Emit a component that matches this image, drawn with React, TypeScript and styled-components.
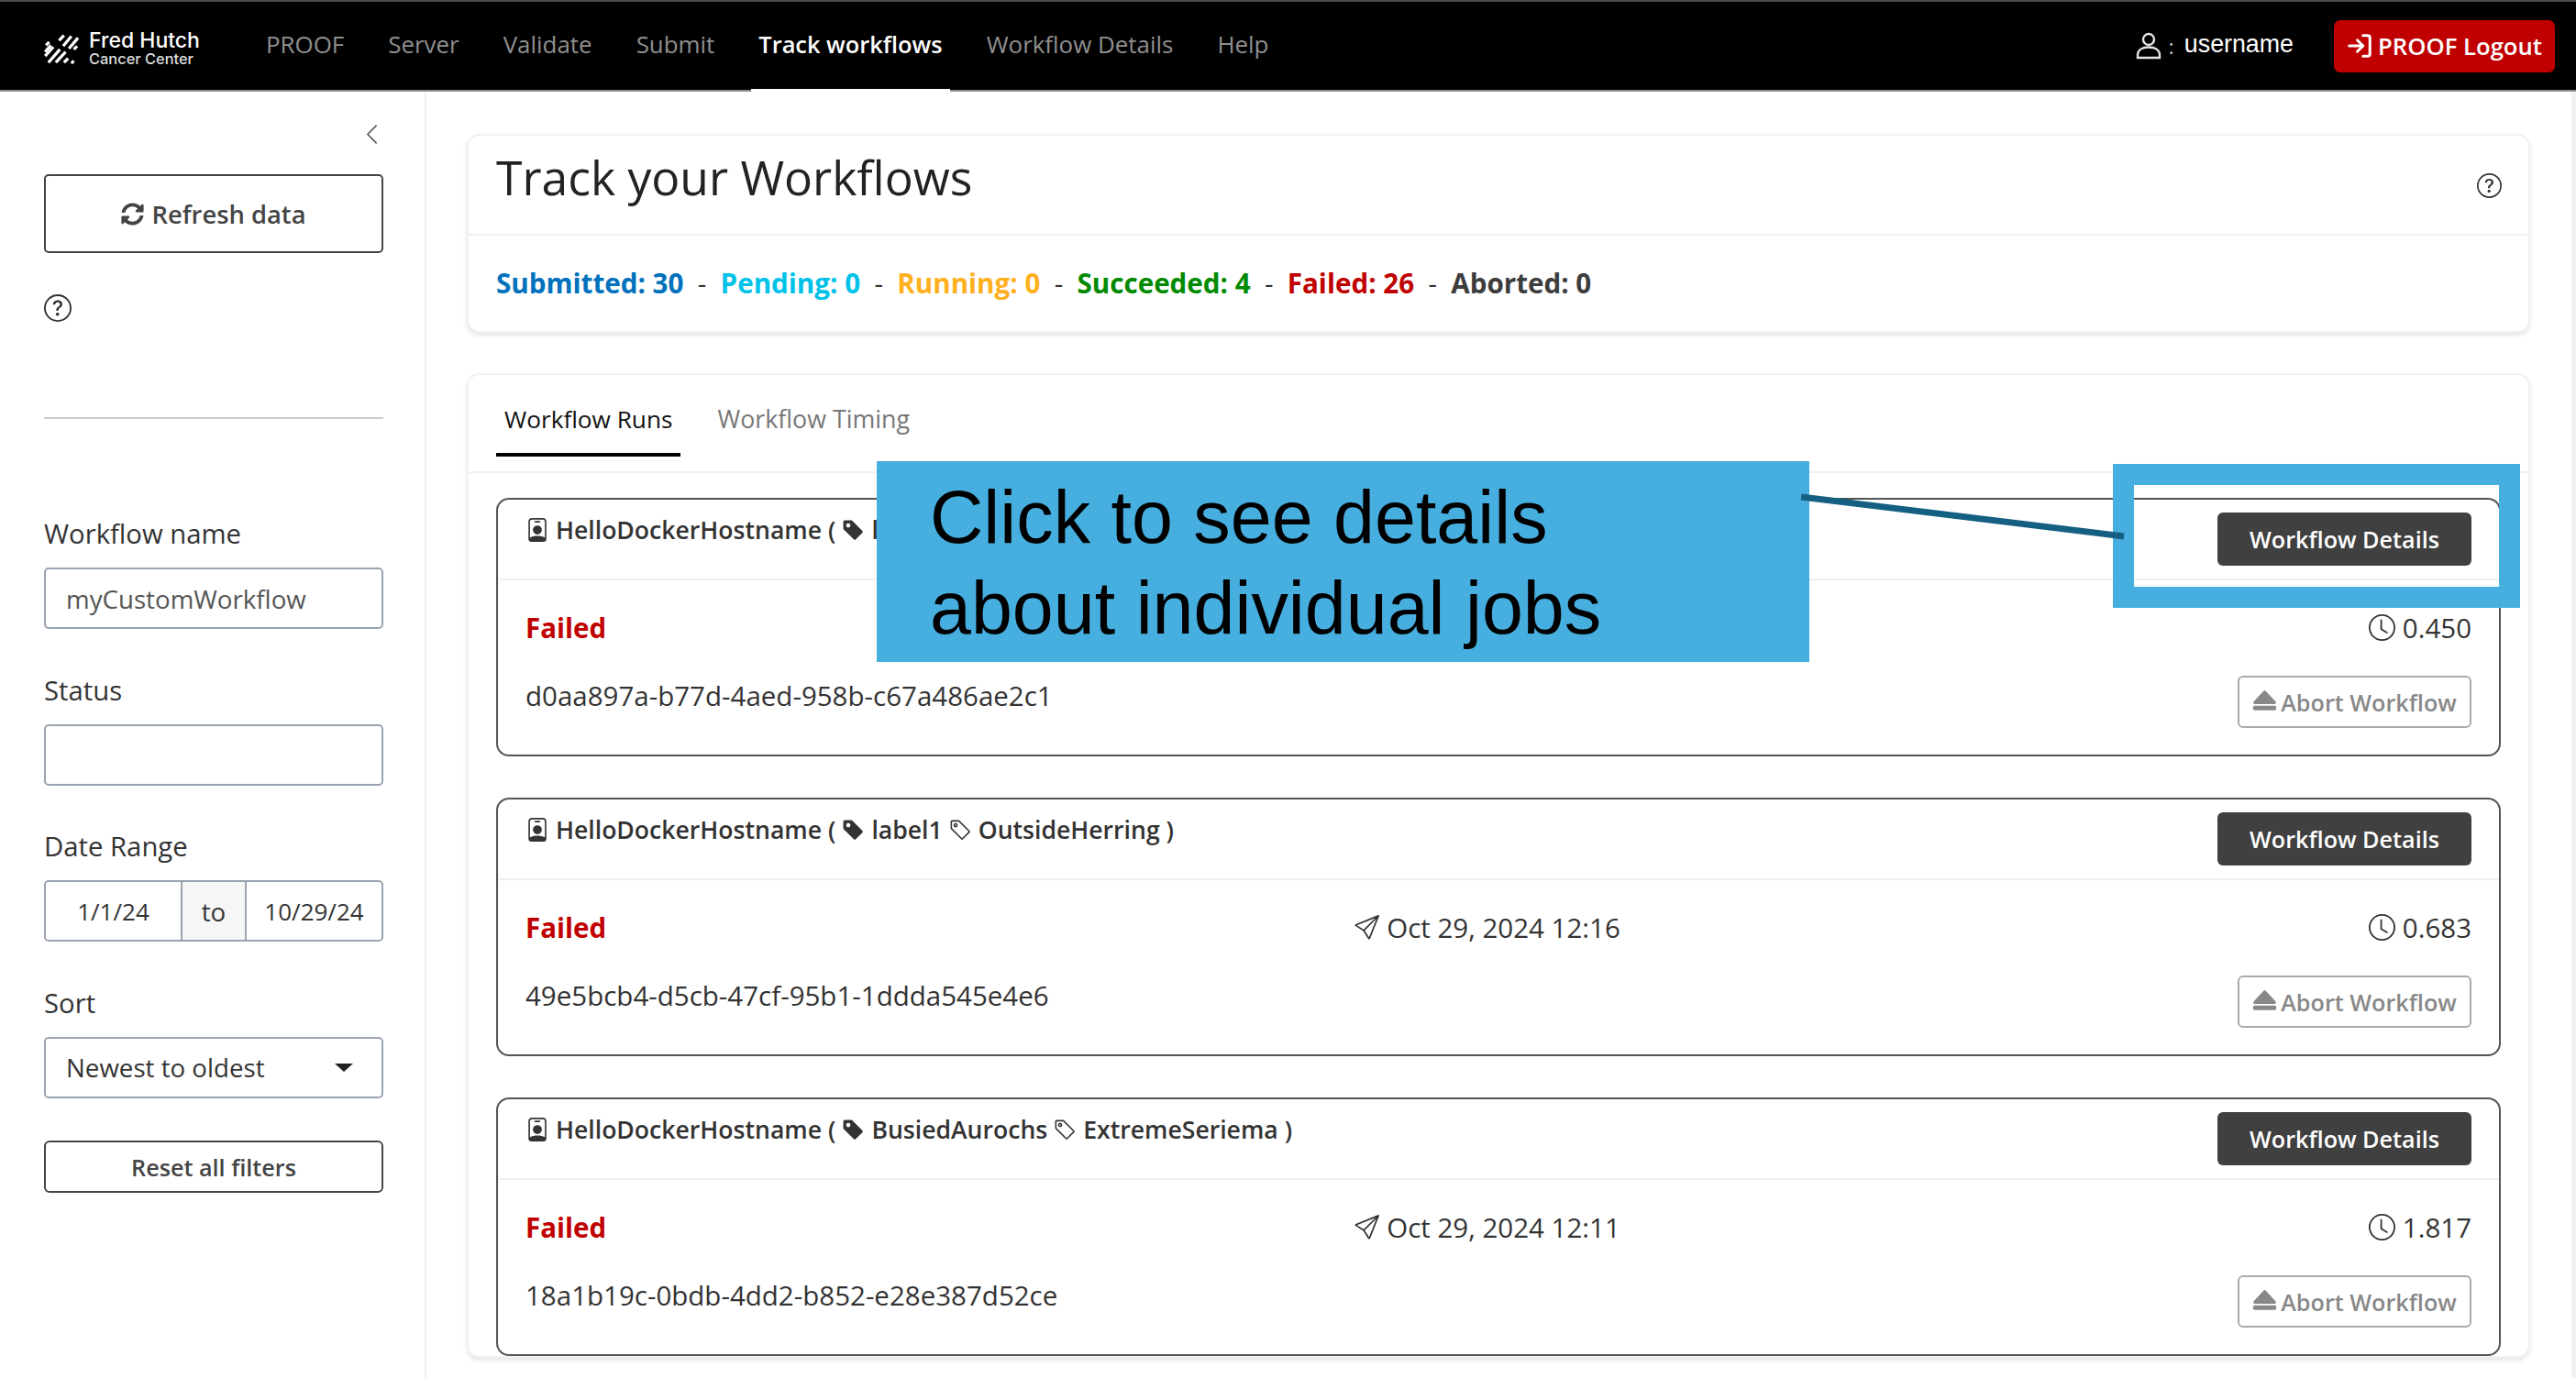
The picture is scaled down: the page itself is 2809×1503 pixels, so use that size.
import React from "react";
import styled, { createGlobalStyle } from "styled-components";
import {
  BsChevronLeft,
  BsClock,
  BsEjectFill,
  BsPersonBadge,
  BsQuestionCircle,
  BsSend,
  BsTag,
  BsTagFill,
} from "react-icons/bs";
import { FaSyncAlt } from "react-icons/fa";
import { LogIn } from "lucide-react";

const GlobalStyle = createGlobalStyle`
  html, body {
    margin: 0;
    padding: 0;
    background: #fff;
    overflow: hidden;
  }
  * {
    box-sizing: border-box;
  }
  body {
    font-family: "Open Sans", "Liberation Sans", sans-serif;
    color: #333;
  }
`;

const runs = [
  {
    labelA: "label1",
    labelB: "OutsideHerring",
    date: "Oct 29, 2024 12:21",
    time: "0.450",
    id: "d0aa897a-b77d-4aed-958b-c67a486ae2c1",
  },
  {
    labelA: "label1",
    labelB: "OutsideHerring",
    date: "Oct 29, 2024 12:16",
    time: "0.683",
    id: "49e5bcb4-d5cb-47cf-95b1-1ddda545e4e6",
  },
  {
    labelA: "BusiedAurochs",
    labelB: "ExtremeSeriema",
    date: "Oct 29, 2024 12:11",
    time: "1.817",
    id: "18a1b19c-0bdb-4dd2-b852-e28e387d52ce",
  },
];

const stats = [
  { label: "Submitted: 30", color: "#0071bc" },
  { label: "Pending: 0", color: "#00c2e8" },
  { label: "Running: 0", color: "#ffb01f" },
  { label: "Succeeded: 4", color: "#008a00" },
  { label: "Failed: 26", color: "#c00000" },
  { label: "Aborted: 0", color: "#3d3d3d" },
];

const Logo = () => (
  <svg width="40" height="34" viewBox="0 0 44 38" fill="none" stroke="#fff" strokeWidth="3.6">
    <path d="M18 9l6-6M23 16L33 4M30 19L41 6M36 20l4-4M2 15l4-4M1 23l7-8" />
    <path d="M1 28L11 17M5 36l14-16M14 36l12-13M24 36l5-5M33 37l3-3" />
  </svg>
);

const UserIcon = () => (
  <svg width="28" height="30" viewBox="0 0 28 30" fill="none" stroke="#e6e6e6" strokeWidth="2.4">
    <circle cx="14" cy="8" r="6" />
    <path d="M2 28v-3c0-5.500 5-8.500 12-8.500s12 3 12 8.500v3z" />
  </svg>
);

export default function App() {
  return (
    <Page>
      <GlobalStyle />
      <NavBar>
        <LogoBlock>
          <Logo />
          <LogoText>
            <LogoName>Fred Hutch</LogoName>
            <LogoSub>Cancer Center</LogoSub>
          </LogoText>
        </LogoBlock>
        <NavLinks>
          <NavLink>PROOF</NavLink>
          <NavLink>Server</NavLink>
          <NavLink>Validate</NavLink>
          <NavLink>Submit</NavLink>
          <NavLink $active>Track workflows</NavLink>
          <NavLink>Workflow Details</NavLink>
          <NavLink>Help</NavLink>
        </NavLinks>
        <UserBlock>
          <UserIcon />
          <UserColon>:</UserColon>
          <UserName>username</UserName>
          <LogoutButton>
            <LogIn size={30} strokeWidth={2.4} />
            PROOF Logout
          </LogoutButton>
        </UserBlock>
      </NavBar>
      <Body>
        <Sidebar>
          <Collapse>
            <BsChevronLeft size={25} />
          </Collapse>
          <RefreshButton>
            <FaSyncAlt size={25} />
            Refresh data
          </RefreshButton>
          <SideHelp>
            <BsQuestionCircle size={30} />
          </SideHelp>
          <SideDivider />
          <Field>
            <FieldLabel>Workflow name</FieldLabel>
            <TextInput $muted>myCustomWorkflow</TextInput>
          </Field>
          <Field>
            <FieldLabel>Status</FieldLabel>
            <TextInput />
          </Field>
          <Field>
            <FieldLabel>Date Range</FieldLabel>
            <DateGroup>
              <DateCell>1/1/24</DateCell>
              <DateTo>to</DateTo>
              <DateCell>10/29/24</DateCell>
            </DateGroup>
          </Field>
          <Field>
            <FieldLabel>Sort</FieldLabel>
            <TextInput>
              Newest to oldest
              <Caret />
            </TextInput>
          </Field>
          <ResetButton>Reset all filters</ResetButton>
        </Sidebar>
        <Main>
          <Card>
            <TitleRow>
              <Title>Track your Workflows</Title>
              <TitleHelp>
                <BsQuestionCircle size={27} />
              </TitleHelp>
            </TitleRow>
            <StatsRow>
              {stats.map((s, i) => (
                <React.Fragment key={s.label}>
                  {i > 0 && <StatDash>-</StatDash>}
                  <Stat $color={s.color}>{s.label}</Stat>
                </React.Fragment>
              ))}
            </StatsRow>
          </Card>
          <Card>
            <Tabs>
              <Tab $active>Workflow Runs</Tab>
              <Tab>Workflow Timing</Tab>
            </Tabs>
            <RunList>
              {runs.map((r) => (
                <RunCard key={r.id}>
                  <RunHead>
                    <RunName>
                      <BsPersonBadge size={26} />
                      HelloDockerHostname (
                      <BsTagFill size={25} />
                      {r.labelA}
                      <BsTag size={25} />
                      {r.labelB} )
                    </RunName>
                    <DetailsButton>Workflow Details</DetailsButton>
                  </RunHead>
                  <RunBody>
                    <RunLine>
                      <FailedText>Failed</FailedText>
                      <RunDate>
                        <BsSend size={27} />
                        {r.date}
                      </RunDate>
                      <RunTime>
                        <BsClock size={29} />
                        {r.time}
                      </RunTime>
                    </RunLine>
                    <RunLine>
                      <RunId>{r.id}</RunId>
                      <AbortButton>
                        <BsEjectFill size={27} />
                        Abort Workflow
                      </AbortButton>
                    </RunLine>
                  </RunBody>
                </RunCard>
              ))}
            </RunList>
          </Card>
        </Main>
      </Body>
      <Callout>
        Click to see details
        <br />
        about individual jobs
      </Callout>
      <CalloutFrame />
      <Connector viewBox="0 0 360 56" width="360" height="56">
        <line x1="3" y1="4" x2="355" y2="47" stroke="#156082" strokeWidth="7" />
      </Connector>
    </Page>
  );
}

const Page = styled.div`
  position: relative;
  width: 2809px;
  height: 1503px;
  overflow: hidden;
  background: #fff;
`;
const NavBar = styled.header`
  display: flex;
  align-items: center;
  height: 100px;
  padding: 0 23px 0 48px;
  background: #000;
  border-top: 2px solid #4a4a4a;
  border-bottom: 2px solid #8c9196;
`;
const LogoBlock = styled.div`
  display: flex;
  align-items: center;
  gap: 9px;
  width: 234px;
  padding-top: 5px;
  color: #fff;
`;
const LogoText = styled.div`
  display: flex;
  flex-direction: column;
`;
const LogoName = styled.span`
  font-family: Inter, sans-serif;
  font-size: 23px;
  font-weight: 500;
  line-height: 23px;
`;
const LogoSub = styled.span`
  font-family: Inter, sans-serif;
  font-size: 16.400px;
  font-weight: 500;
  line-height: 17px;
  color: #ddd;
`;
const NavLinks = styled.nav`
  display: flex;
  align-self: stretch;
  gap: 32px;
`;
const NavLink = styled.a<{ $active?: boolean }>`
  display: flex;
  align-items: center;
  padding: 0 8px 3px;
  margin-bottom: -3px;
  font-size: ${({ $active }) => ($active ? "25.4px" : "25.92px")};
  font-weight: ${({ $active }) => ($active ? 600 : 400)};
  color: ${({ $active }) => ($active ? "#fff" : "#8f8f8f")};
  border-bottom: 4px solid ${({ $active }) => ($active ? "#fff" : "transparent")};
`;
const UserBlock = styled.div`
  display: flex;
  align-items: center;
  margin-left: auto;
  color: #fff;
  svg {
    flex: none;
  }
`;
const UserColon = styled.span`
  width: 14px;
  margin-left: 8px;
  font-size: 22px;
  color: #ccc;
`;
const UserName = styled.span`
  margin: 0 44px 3px 3px;
  font-family: "Liberation Sans", sans-serif;
  font-size: 26.8px;
`;
const LogoutButton = styled.button`
  display: flex;
  align-items: center;
  gap: 5px;
  height: 57px;
  width: 241px;
  padding: 0 0 0 13px;
  border: none;
  border-radius: 7px;
  background: #c00000;
  color: #fff;
  font-family: inherit;
  font-size: 25.7px;
  font-weight: 600;
`;
const Body = styled.div`
  display: flex;
  height: 1403px;
  border-right: 5px solid #f1f2f3;
`;
const Sidebar = styled.aside`
  display: flex;
  flex-direction: column;
  flex: none;
  width: 465px;
  padding: 0 45px 0 48px;
  border-right: 2px solid #eef1f2;
`;
const Collapse = styled.div`
  display: flex;
  justify-content: flex-end;
  height: 90px;
  padding: 34px 0 0 0;
  color: #555;
`;
const RefreshButton = styled.button`
  display: flex;
  align-items: center;
  justify-content: center;
  gap: 8px;
  height: 86px;
  border: 2px solid #444;
  border-radius: 5px;
  background: #fff;
  color: #444;
  font-family: inherit;
  font-size: 27.36px;
  font-weight: 600;
`;
const SideHelp = styled.div`
  height: 179px;
  padding-top: 45px;
  color: #333;
`;
const SideDivider = styled.div`
  height: 2px;
  margin-bottom: 105px;
  background: #ccc;
`;
const Field = styled.div`
  display: flex;
  flex-direction: column;
  margin-bottom: 46.5px;
`;
const FieldLabel = styled.label`
  height: 57px;
  font-size: 29.3px;
  line-height: 40px;
  color: #333;
`;
const TextInput = styled.div<{ $muted?: boolean }>`
  display: flex;
  align-items: center;
  justify-content: space-between;
  height: 67px;
  padding: 0 22px;
  border: 2px solid #9aa3b1;
  border-radius: 5px;
  font-size: 27.7px;
  color: ${({ $muted }) => ($muted ? "#555" : "#333")};
`;
const Caret = styled.span`
  width: 0;
  height: 0;
  margin-right: 9px;
  border-left: 10px solid transparent;
  border-right: 10px solid transparent;
  border-top: 9px solid #222;
`;
const DateGroup = styled.div`
  display: flex;
  height: 67px;
  border: 2px solid #9aa3b1;
  border-radius: 5px;
  font-size: 26px;
  color: #333;
`;
const DateCell = styled.div`
  display: flex;
  flex: 1;
  align-items: center;
  justify-content: center;
`;
const DateTo = styled.div`
  display: flex;
  flex: none;
  align-items: center;
  justify-content: center;
  width: 72px;
  background: #f6f6f6;
  border-left: 2px solid #9aa3b1;
  border-right: 2px solid #9aa3b1;
  font-size: 27.7px;
`;
const ResetButton = styled.button`
  height: 57px;
  border: 2px solid #444;
  border-radius: 6px;
  background: #fff;
  color: #444;
  font-family: inherit;
  font-size: 25.2px;
  font-weight: 600;
`;
const Main = styled.main`
  display: flex;
  flex: 1;
  flex-direction: column;
  gap: 44px;
  padding: 46px 45px 0 44px;
  min-width: 0;
`;
const Card = styled.section`
  border: 2px solid #f0f1f2;
  border-radius: 14px;
  background: #fff;
  box-shadow: 0 3px 5px rgba(0, 0, 0, 0.1);
`;
const TitleRow = styled.div`
  display: flex;
  align-items: center;
  justify-content: space-between;
  height: 109px;
  padding: 0 29px 0 30px;
  border-bottom: 2px solid #eef1f2;
`;
const Title = styled.h1`
  margin: 0 0 18px;
  font-size: 51.6px;
  font-weight: 400;
  color: #222;
`;
const TitleHelp = styled.div`
  display: flex;
  padding-top: 2px;
  color: #333;
`;
const StatsRow = styled.div`
  display: flex;
  align-items: center;
  gap: 15.3px;
  height: 104px;
  padding: 0 30px 2px;
  font-size: 29.6px;
`;
const Stat = styled.span<{ $color: string }>`
  font-weight: 700;
  color: ${({ $color }) => $color};
`;
const StatDash = styled.span`
  color: #333;
`;
const Tabs = styled.div`
  display: flex;
  gap: 31px;
  height: 107px;
  padding: 0 30px;
  border-bottom: 2px solid #eef1f2;
`;
const Tab = styled.div<{ $active?: boolean }>`
  display: flex;
  align-items: center;
  height: 76px;
  margin-top: 13px;
  padding: 0 9px 3px;
  font-size: ${({ $active }) => ($active ? "26.2px" : "26.8px")};
  font-weight: 500;
  color: ${({ $active }) => ($active ? "#111" : "#777")};
  border-bottom: 4px solid ${({ $active }) => ($active ? "#000" : "transparent")};
`;
const RunList = styled.div`
  display: flex;
  flex-direction: column;
  gap: 45px;
  padding: 27px 30px 0;
`;
const RunCard = styled.article`
  height: 282px;
  border: 2px solid #555;
  border-radius: 14px;
`;
const RunHead = styled.div`
  display: flex;
  align-items: center;
  justify-content: space-between;
  height: 88px;
  padding: 0 30px;
  border-bottom: 2px solid #eef1f2;
`;
const RunName = styled.div`
  display: flex;
  align-items: center;
  gap: 7px;
  padding-bottom: 20px;
  font-size: 26.6px;
  font-weight: 600;
  color: #333;
`;
const DetailsButton = styled.button`
  width: 277px;
  height: 58px;
  border: none;
  border-radius: 6px;
  background: #404040;
  color: #fff;
  font-family: inherit;
  font-size: 25.2px;
  font-weight: 600;
`;
const RunBody = styled.div`
  display: flex;
  flex-direction: column;
  padding: 27px 30px 0;
`;
const RunLine = styled.div`
  display: flex;
  align-items: center;
  justify-content: space-between;
  min-height: 48px;
  & + & {
    margin-top: 29px;
  }
`;
const FailedText = styled.span`
  flex: 1;
  font-size: 29.5px;
  font-weight: 700;
  color: #c00000;
`;
const RunDate = styled.span`
  display: flex;
  flex: none;
  align-items: center;
  gap: 8px;
  padding-right: 24px;
  font-size: 29.5px;
  color: #333;
`;
const RunTime = styled.span`
  display: flex;
  flex: 1;
  align-items: center;
  justify-content: flex-end;
  gap: 8px;
  font-size: 29.5px;
  color: #333;
`;
const RunId = styled.span`
  margin-bottom: 14px;
  font-size: 29.5px;
  color: #333;
`;
const AbortButton = styled.button`
  display: flex;
  align-items: center;
  justify-content: center;
  gap: 4px;
  width: 255px;
  height: 57px;
  border: 2px solid #aaa;
  border-radius: 6px;
  background: #fff;
  color: #888;
  font-family: inherit;
  font-size: 25.2px;
  font-weight: 600;
`;
const Callout = styled.div`
  position: absolute;
  left: 956px;
  top: 503px;
  width: 1017px;
  height: 219px;
  padding: 12px 58px;
  background: #47afe0;
  color: #000;
  font-family: "Liberation Sans", Arial, sans-serif;
  font-size: 80.8px;
  line-height: 99px;
`;
const CalloutFrame = styled.div`
  position: absolute;
  left: 2304px;
  top: 506px;
  width: 444px;
  height: 157px;
  border: 23px solid #47afe0;
`;
const Connector = styled.svg`
  position: absolute;
  left: 1961px;
  top: 538px;
`;
